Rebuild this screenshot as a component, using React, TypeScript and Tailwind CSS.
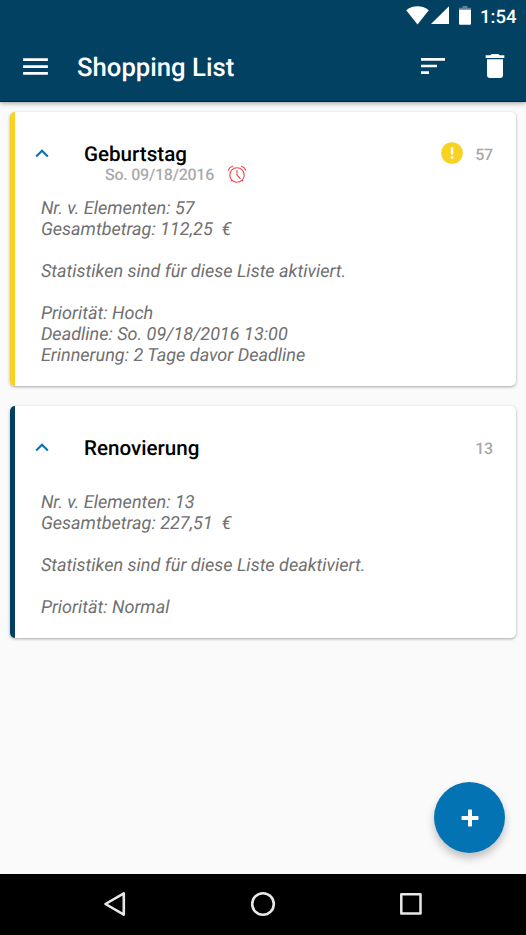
import type { ReactNode } from "react";

function StatusBar() {
  return (
    <div className="flex h-8 items-center justify-end pr-[10px] text-white">
      <svg width="23" height="19" viewBox="0 0 23 19" className="-mt-px mr-[2px]" fill="currentColor">
        <path d="M11.5 18.4 L0.2 4.3 C3.3 1.7 7.2 0.3 11.5 0.3 S19.7 1.7 22.8 4.3 Z" />
      </svg>
      <svg width="18" height="19" viewBox="0 0 18 19" className="-mt-px mr-[10px]" fill="currentColor">
        <path d="M0 18 L18 0.3 V18 Z" />
      </svg>
      <svg width="12" height="19" viewBox="0 0 12 19" className="-mt-px mr-[9px]" fill="currentColor">
        <path d="M3.5 0 H8.5 V1.8 H12 V4 H0 V1.8 H3.5 Z" opacity="0.35" />
        <path d="M0 3.8 H12 V17.8 Q12 18.8 11 18.8 H1 Q0 18.8 0 17.8 Z" />
      </svg>
      <span className="w-[36px] whitespace-nowrap pt-px text-[18.5px] leading-8 font-medium">1:54</span>
    </div>
  );
}

function Toolbar() {
  return (
    <div className="flex h-[69px] items-center pl-[19px] text-white">
      <svg width="33" height="33" viewBox="0 0 24 24" fill="currentColor">
        <path d="M3 18h18v-2H3v2zm0-5h18v-2H3v2zm0-7v2h18V6H3z" />
      </svg>
      <h1 className="ml-[25px] flex-1 pt-[3px] text-[25.7px] leading-8 font-medium">Shopping List</h1>
      <svg width="32" height="32" viewBox="0 0 24 24" className="mr-[30px] -mt-[2px]" fill="currentColor">
        <path d="M3 18h6v-2H3v2zM3 6v2h18V6H3zm0 7h12v-2H3v2z" />
      </svg>
      <svg width="32" height="32" viewBox="0 0 24 24" className="mr-[15px] -mt-[2px]" fill="currentColor">
        <path d="M6 19c0 1.1.9 2 2 2h8c1.1 0 2-.9 2-2V7H6v12zM19 4h-3.5l-1-1h-5l-1 1H5v2h14V4z" />
      </svg>
    </div>
  );
}

function AlarmIcon() {
  return (
    <svg width="20" height="19" viewBox="0 0 20 19" className="-mt-px" fill="none" stroke="#f04444" strokeWidth="1.1" strokeLinecap="round">
      <circle cx="10" cy="10" r="7.2" />
      <path d="M10 5.5V10l3 3.4M4.7 15.2 4.2 16M15.3 15.2l.5.8" />
      <path d="M1.3 5.3C2 3.5 3.8 1.8 5.6 1.3M18.7 5.3C18 3.5 16.2 1.8 14.4 1.3" />
    </svg>
  );
}

type CardProps = {
  title: string;
  count: number;
  accent: string;
  size: string;
  lines: string[];
  date?: string;
  badge?: ReactNode;
};

function ListCard({ title, count, accent, size, lines, date, badge }: CardProps) {
  return (
    <article
      className={`flex overflow-hidden rounded-[5px] bg-white shadow-[0_1px_3px_rgba(0,0,0,0.34)] ${size}`}
    >
      <div className={`w-[5px] shrink-0 ${accent}`} />
      <div className="flex-1 pl-[20px]">
        <div className="flex h-[86px] items-start pt-[30px]">
          <svg width="14" height="9" viewBox="0 0 14 9" className="mt-[7px]" fill="none" stroke="#0873b5" strokeWidth="2.1">
            <path d="M1.2 7.5 7 1.8l5.8 5.7" />
          </svg>
          <div className="ml-[34.6px] flex-1">
            <h2 className="text-[20.6px] leading-[26px] font-medium text-black">{title}</h2>
            {date && (
              <div className="-mt-[3px] flex h-[19px] items-center pl-[21px]">
                <span className="w-[122px] whitespace-nowrap text-[16px] leading-[19px] font-medium tracking-[-0.24px] text-[#ababab]">
                  {date}
                </span>
                <AlarmIcon />
              </div>
            )}
          </div>
          {badge}
          <span className="mr-[23px] text-[16px] leading-[26px] font-medium tracking-[-0.2px] text-[#a8a8a8]">{count}</span>
        </div>
        <div className="pl-[5.5px] text-[18.05px] leading-[21px] whitespace-pre text-[#707070] italic">
          {lines.map((line, i) => (
            <p key={i} className="h-[21px]">
              {line}
            </p>
          ))}
        </div>
      </div>
    </article>
  );
}

function NavBar() {
  return (
    <nav className="flex h-[61px] items-center bg-black pl-[103px] text-[#e8e8e8]">
      <svg width="24" height="26" viewBox="0 0 24 26" className="-mt-px" fill="none" stroke="currentColor" strokeWidth="2.6" strokeLinejoin="round">
        <path d="M2.5 13 20.8 2.4V23.6Z" />
      </svg>
      <svg width="26" height="26" viewBox="0 0 26 26" className="-mt-px ml-[123px]" fill="none" stroke="currentColor" strokeWidth="2.6">
        <circle cx="13" cy="13" r="10.8" />
      </svg>
      <svg width="24" height="24" viewBox="0 0 24 24" className="-mt-px ml-[123px]" fill="none" stroke="currentColor" strokeWidth="2.5" strokeLinejoin="round">
        <rect x="2.3" y="2.3" width="19.2" height="19.2" />
      </svg>
    </nav>
  );
}

export default function App() {
  return (
    <div className="relative flex h-[935px] w-[526px] flex-col overflow-hidden bg-[#fafafa] font-['Roboto',sans-serif] [text-rendering:geometricPrecision]">
      <header className="z-10 h-[102px] shrink-0 border-b border-[#03234f] bg-[#034163] shadow-[0_1px_5px_rgba(0,0,0,0.4)]">
        <StatusBar />
        <Toolbar />
      </header>
      <main className="flex flex-1 flex-col gap-[20px] pt-[10.4px] pr-[10px] pl-[10.4px]">
        <ListCard
          title="Geburtstag"
          count={57}
          accent="bg-[#f8d220]"
          size="h-[274px]"
          date="So. 09/18/2016"
          badge={
            <svg width="22" height="22" viewBox="0 0 22 22" className="mr-[12px]">
              <circle cx="11" cy="11" r="10.8" fill="#f8d220" />
              <path d="M9.8 5.4h2.5v7H9.8zM9.8 14.3h2.5v2.4H9.8z" fill="#fff" />
            </svg>
          }
          lines={[
            "Nr. v. Elementen: 57",
            "Gesamtbetrag: 112,25  €",
            "",
            "Statistiken sind für diese Liste aktiviert.",
            "",
            "Priorität: Hoch",
            "Deadline: So. 09/18/2016 13:00",
            "Erinnerung: 2 Tage davor Deadline",
          ]}
        />
        <ListCard
          title="Renovierung"
          count={13}
          accent="bg-[#033f63]"
          size="h-[232px]"
          lines={[
            "Nr. v. Elementen: 13",
            "Gesamtbetrag: 227,51  €",
            "",
            "Statistiken sind für diese Liste deaktiviert.",
            "",
            "Priorität: Normal",
          ]}
        />
      </main>
      <button
        aria-label="+"
        className="absolute top-[782px] left-[434px] flex size-[71px] items-center justify-center rounded-full bg-[#0473b4] shadow-[0_5px_9px_rgba(0,0,0,0.24)]"
      >
        <svg width="18" height="18" viewBox="0 0 18 18" fill="#fff">
          <path d="M7 1.2Q7 .5 7.7 .5h2.6q.7 0 .7.7V7h5.8q.7 0 .7.7v2.6q0 .7-.7.7H11v5.8q0 .7-.7.7H7.7q-.7 0-.7-.7V11H1.2q-.7 0-.7-.7V7.7Q.5 7 1.2 7H7Z" />
        </svg>
      </button>
      <NavBar />
    </div>
  );
}
